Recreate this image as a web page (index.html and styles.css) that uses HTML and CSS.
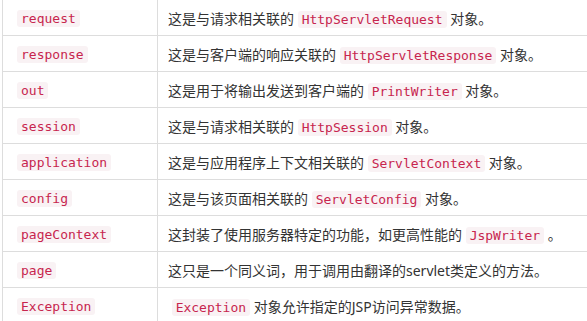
FILE: index.html
```html
<!DOCTYPE html>
<html>
<head>
<meta charset="utf-8">
<link rel="stylesheet" href="styles.css">
</head>
<body>
<div class="wrap">
<table class="objs">
<tr><td class="name"><code>request</code></td><td class="desc">这是与请求相关联的 <code>HttpServletRequest</code> 对象。</td></tr>
<tr><td class="name"><code>response</code></td><td class="desc">这是与客户端的响应关联的 <code>HttpServletResponse</code> 对象。</td></tr>
<tr><td class="name"><code>out</code></td><td class="desc">这是用于将输出发送到客户端的 <code>PrintWriter</code> 对象。</td></tr>
<tr><td class="name"><code>session</code></td><td class="desc">这是与请求相关联的 <code>HttpSession</code> 对象。</td></tr>
<tr><td class="name"><code>application</code></td><td class="desc">这是与应用程序上下文相关联的 <code>ServletContext</code> 对象。</td></tr>
<tr><td class="name"><code>config</code></td><td class="desc">这是与该页面相关联的 <code>ServletConfig</code> 对象。</td></tr>
<tr><td class="name"><code>pageContext</code></td><td class="desc">这封装了使用服务器特定的功能，如更高性能的 <code>JspWriter</code> 。</td></tr>
<tr><td class="name"><code>page</code></td><td class="desc">这只是一个同义词，用于调用由翻译的servlet类定义的方法。</td></tr>
<tr><td class="name"><code>Exception</code></td><td class="desc">&nbsp;<code>Exception</code> 对象允许指定的JSP访问异常数据。</td></tr>
</table>
</div>
</body>
</html>
```

FILE: styles.css
```css
html, body {
  margin: 0;
  padding: 0;
  background: #fff;
  overflow: hidden;
}
.wrap {
  padding-left: 2px;
  margin-top: -1px;
}
.objs {
  border-collapse: collapse;
  width: 620px;
  font-family: "Noto Sans", "Noto Sans CJK SC", sans-serif;
  font-size: 14px;
  color: #333;
}
.objs td {
  border: 1px solid #ddd;
  height: 35px;
  padding: 0;
  vertical-align: middle;
  white-space: nowrap;
}
.name {
  width: 140px;
  padding-left: 14px !important;
}
.desc {
  padding-left: 10px !important;
}
code {
  font-family: "DejaVu Sans Mono", monospace;
  font-size: 13px;
  color: #c7254e;
  background: #f9f2f4;
  padding: 1px 4px;
  border-radius: 3px;
}
```
